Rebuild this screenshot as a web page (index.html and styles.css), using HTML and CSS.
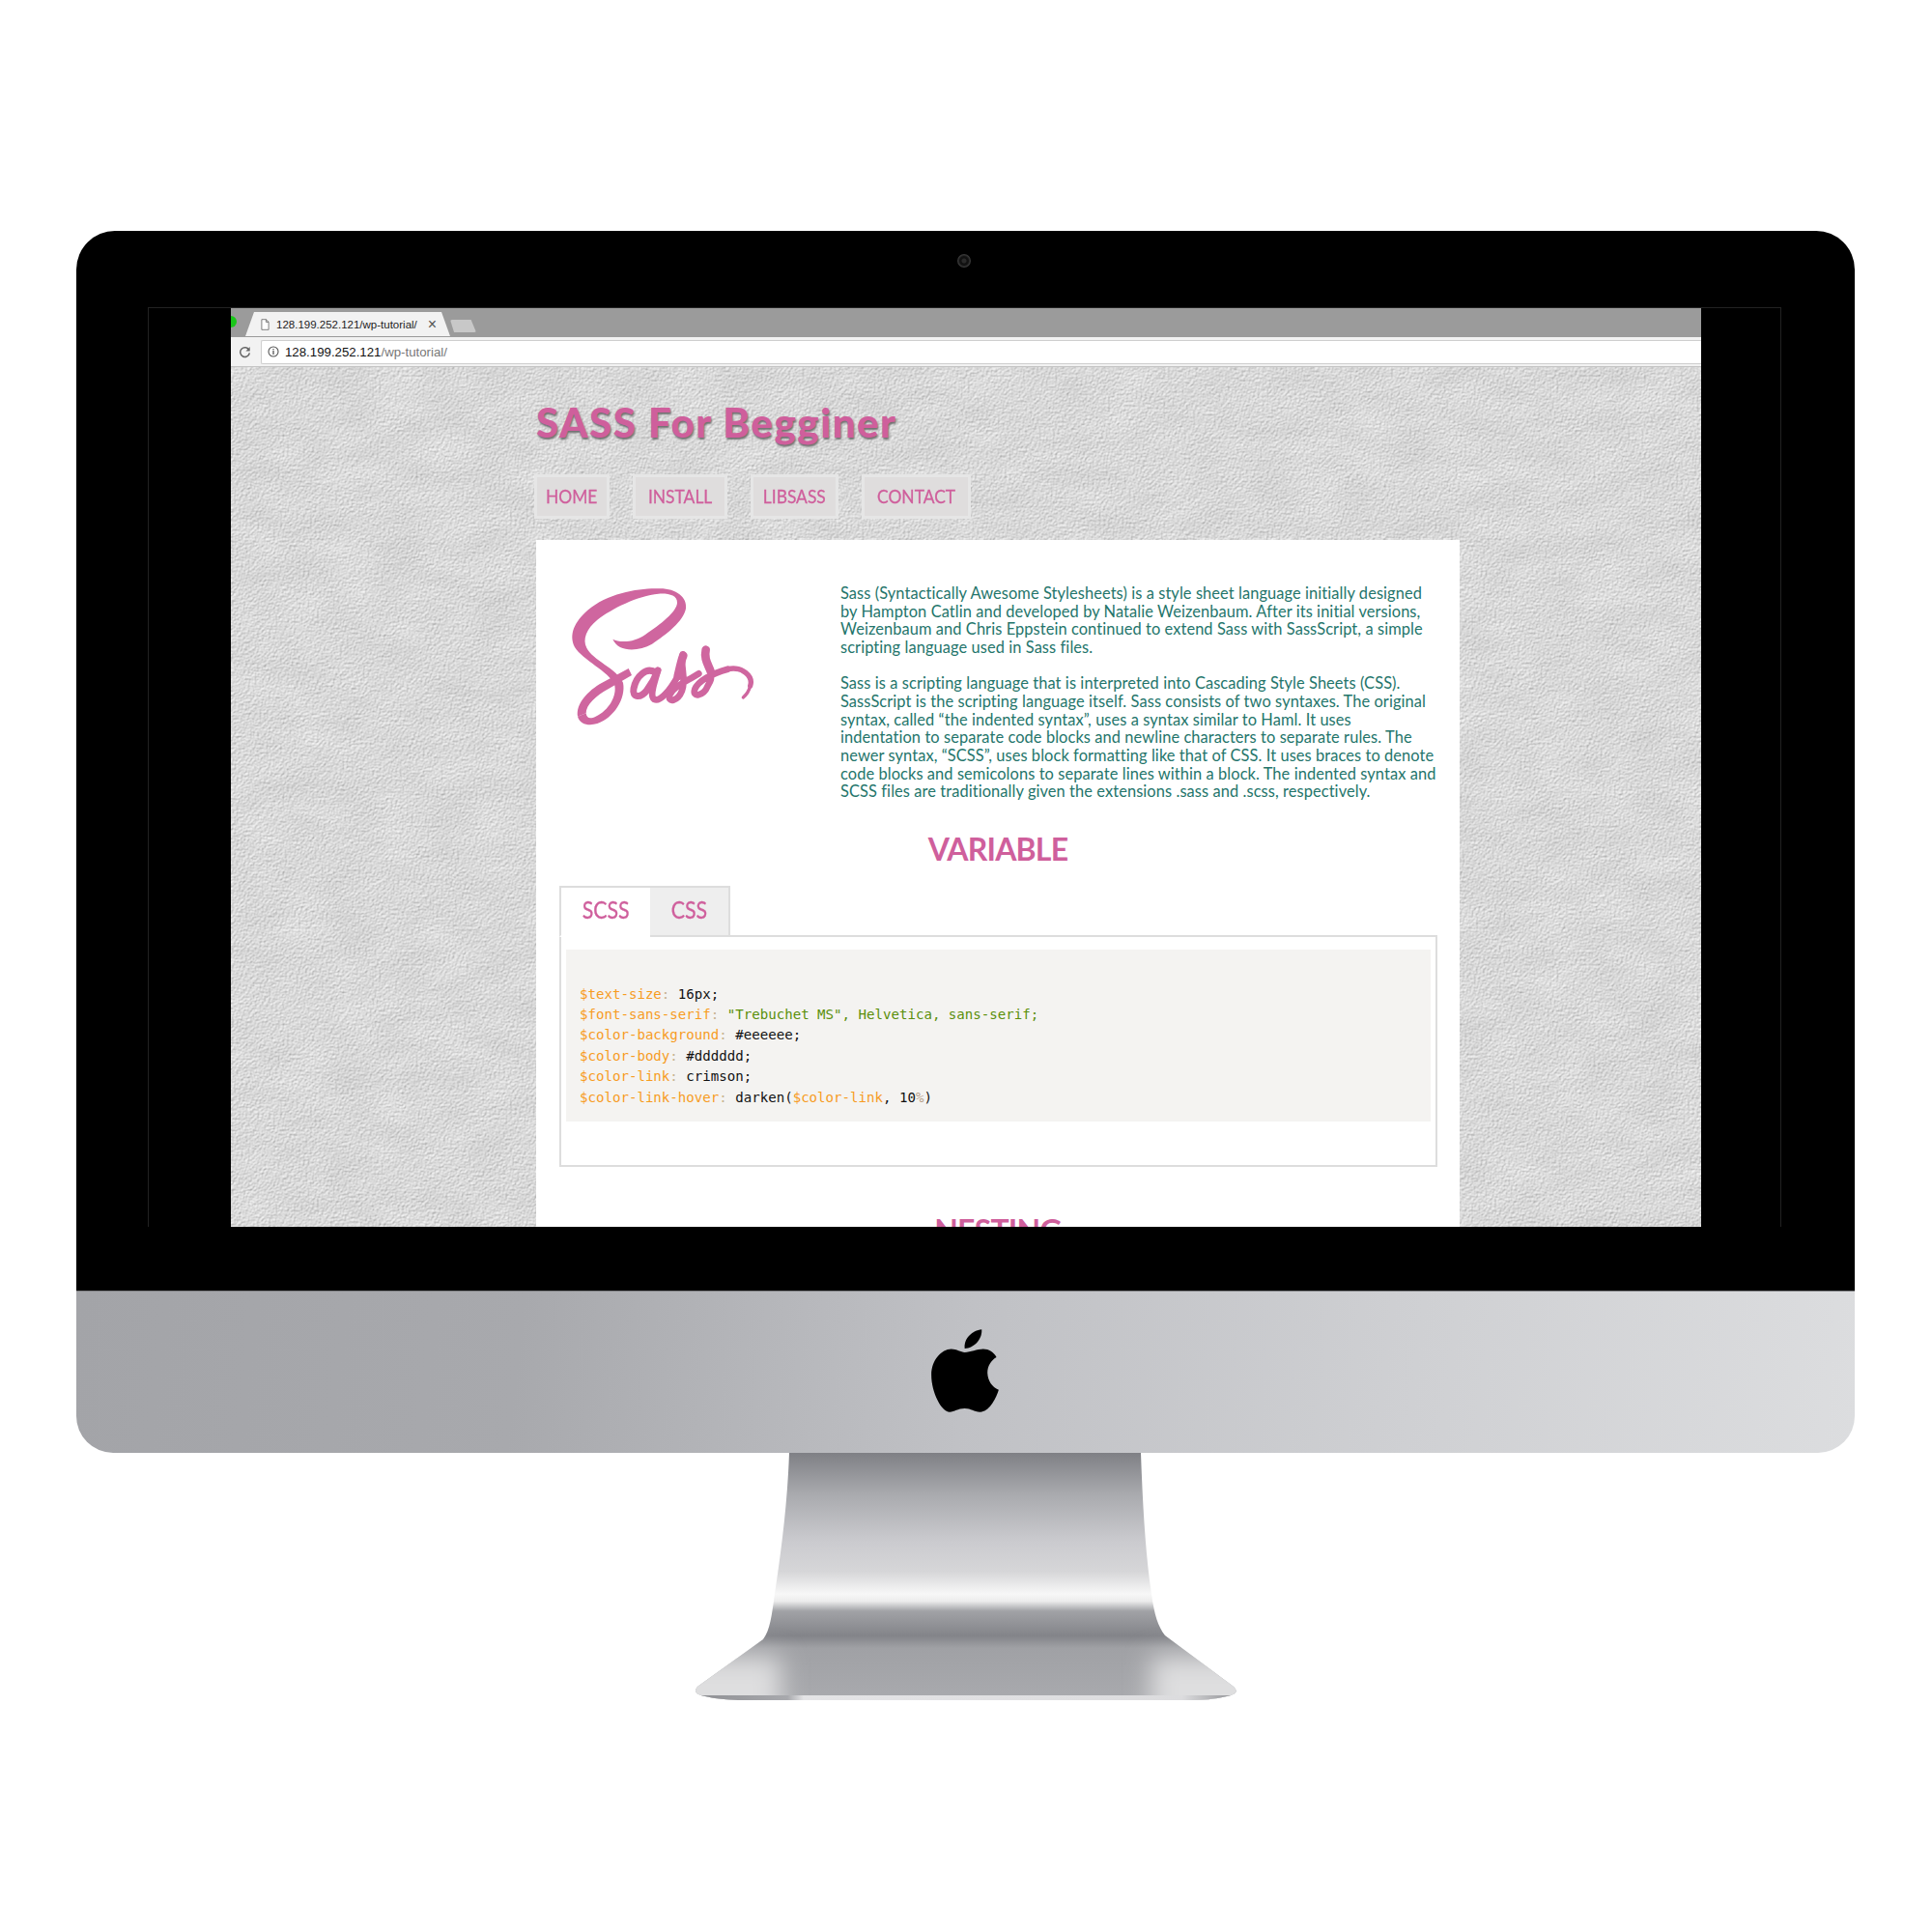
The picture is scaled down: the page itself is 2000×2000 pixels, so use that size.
FILE: index.html
```html
<!DOCTYPE html>
<html lang="en">
<head>
<meta charset="utf-8">
<title>SASS For Begginer</title>
<link rel="stylesheet" href="styles.css">
</head>
<body>
<div class="imac">
  <div class="bezel">
    <div class="camera"><span class="lens"></span></div>
    <div class="panel">
      <div class="browser">
        <div class="tabstrip">
          <span class="dot"></span>
          <div class="tab">
            <svg class="file-icon" viewBox="0 0 10 13"><path d="M1 .6h5l3 3v8.8H1z M6 .6v3h3" fill="#fff" stroke="#666" stroke-width=".9"/></svg>
            <span class="tab-title">128.199.252.121/wp-tutorial/</span>
            <span class="tab-close">×</span>
          </div>
          <div class="newtab"></div>
        </div>
        <div class="toolbar">
          <svg class="reload" viewBox="0 0 14 14"><path d="M11.6 4.6A5.2 5.2 0 1 0 12.2 8" fill="none" stroke="#666" stroke-width="1.6"/><path d="M12.6 1.2v4.6H8z" fill="#666"/></svg>
          <div class="address">
            <svg class="info" viewBox="0 0 12 12"><circle cx="6" cy="6" r="5" fill="none" stroke="#555" stroke-width="1.1"/><path d="M6 5v4M6 3v1.3" stroke="#555" stroke-width="1.3"/></svg>
            <span class="host">128.199.252.121</span><span class="path">/wp-tutorial/</span>
          </div>
        </div>
        <div class="page">
          <svg class="wall" width="1522" height="891">
            <filter id="stucco" x="0" y="0" width="100%" height="100%" color-interpolation-filters="sRGB">
              <feTurbulence type="fractalNoise" baseFrequency="0.42" numOctaves="4" seed="11"/>
              <feDiffuseLighting surfaceScale="0.6" lighting-color="#ffffff" diffuseConstant="1" result="grain">
                <feDistantLight azimuth="235" elevation="62"/>
              </feDiffuseLighting>
              <feGaussianBlur in="grain" stdDeviation="0.55" result="soft"/>
              <feTurbulence type="fractalNoise" baseFrequency="0.02 0.04" numOctaves="3" seed="4"/>
              <feColorMatrix values=".07 0 0 0 .93  .07 0 0 0 .93  .07 0 0 0 .93  0 0 0 0 1" result="mottle"/>
              <feBlend in="soft" in2="mottle" mode="multiply"/>
            </filter>
            <rect width="1522" height="891" filter="url(#stucco)"/>
          </svg>
          <div class="content">
            <h1 class="site-title">SASS For Begginer</h1>
            <nav class="nav">
              <a class="nav-item"><span class="squeeze">HOME</span></a>
              <a class="nav-item"><span class="squeeze">INSTALL</span></a>
              <a class="nav-item"><span class="squeeze">LIBSASS</span></a>
              <a class="nav-item"><span class="squeeze">CONTACT</span></a>
            </nav>
            <main class="card">
              <section class="intro">
                <svg class="logo" viewBox="0 0 630 480">
                  <g class="logo-fill">
                    <path d="M163 185C185 197 232 195 265 170C310 140 362 100 363 72C364 48 335 42 305 44C240 50 160 90 115 125C82 152 68 185 82 212C100 250 175 275 195 320C205 370 165 430 115 447C90 455 60 450 54 425L80 415C82 433 95 432 110 425C150 408 178 360 168 325C150 285 70 250 45 210C25 170 45 130 85 95C150 40 250 25 310 28C360 28 395 55 390 90C382 130 330 170 285 200C240 225 180 225 163 185Z"/>
                    <path d="M54 425C48 385 85 345 130 320L212 276L222 297L150 339C110 360 80 390 80 415Z"/>
                  </g>
                  <g class="logo-stroke">
                    <path stroke-width="21" d="M298 290C268 268 236 300 228 338C222 368 250 368 268 345C283 325 296 300 303 282"/>
                    <path stroke-width="20" d="M303 282C295 315 275 360 292 372C310 380 340 345 365 300"/>
                    <path stroke-width="26" d="M365 300C372 270 376 250 382 236"/>
                    <path stroke-width="20" d="M380 232C372 270 392 305 378 345C365 378 332 385 340 358C348 335 385 320 430 292"/>
                    <path stroke-width="26" d="M452 218C446 245 458 262 467 285"/>
                    <path stroke-width="20" d="M467 285C472 305 467 315 458 330C445 362 408 368 418 340C428 315 470 292 520 278"/>
                    <path stroke-width="16" d="M520 278C565 268 600 300 590 330"/>
                    <path stroke-width="10" d="M590 330C585 350 575 360 568 366"/>
                  </g>
                </svg>
                <div class="copy">
                  <p>Sass (Syntactically Awesome Stylesheets) is a style sheet language initially designed<br>by Hampton Catlin and developed by Natalie Weizenbaum. After its initial versions,<br>Weizenbaum and Chris Eppstein continued to extend Sass with SassScript, a simple<br>scripting language used in Sass files.</p>
                  <p>Sass is a scripting language that is interpreted into Cascading Style Sheets (CSS).<br>SassScript is the scripting language itself. Sass consists of two syntaxes. The original<br>syntax, called “the indented syntax”, uses a syntax similar to Haml. It uses<br>indentation to separate code blocks and newline characters to separate rules. The<br>newer syntax, “SCSS”, uses block formatting like that of CSS. It uses braces to denote<br>code blocks and semicolons to separate lines within a block. The indented syntax and<br>SCSS files are traditionally given the extensions .sass and .scss, respectively.</p>
                </div>
              </section>
              <h2 class="heading">VARIABLE</h2>
              <div class="tabs">
                <div class="tabs-head">
                  <span class="code-tab active"><span class="squeeze">SCSS</span></span>
                  <span class="code-tab"><span class="squeeze">CSS</span></span>
                </div>
                <div class="tabs-body">
<pre class="code"><span class="v">$text-size<i>:</i></span> 16px;
<span class="v">$font-sans-serif<i>:</i></span> <span class="s">"Trebuchet MS", Helvetica, sans-serif;</span>
<span class="v">$color-background<i>:</i></span> #eeeeee;
<span class="v">$color-body<i>:</i></span> #dddddd;
<span class="v">$color-link<i>:</i></span> crimson;
<span class="v">$color-link-hover<i>:</i></span> darken(<span class="v">$color-link</span>, 10<span class="pct">%</span>)</pre>
                </div>
              </div>
              <h2 class="heading next">NESTING</h2>
            </main>
          </div>
        </div>
      </div>
    </div>
  </div>
  <div class="chin">
    <svg class="apple" viewBox="193 108 210 259"><path d="M350 109C352 140 325 168 297 168C293 138 320 112 350 109Z"/><path d="M297 180C315 180 335 170 355 170C372 170 388 180 396 195C378 205 367 225 368 245C369 268 382 288 403 297C395 322 375 365 345 366C325 366 318 355 297 355C275 355 265 366 250 366C225 366 193 305 193 250C193 205 225 170 255 170C272 170 285 180 297 180Z"/></svg>
  </div>
  <svg class="stand" viewBox="720 1504 560 256">
    <defs>
      <linearGradient id="metal" x1="0" y1="0" x2="0" y2="1">
        <stop offset="0" stop-color="#7f8085"/>
        <stop offset=".167" stop-color="#a9aaae"/>
        <stop offset=".36" stop-color="#cbcbcf"/>
        <stop offset=".48" stop-color="#d6d6d8"/>
        <stop offset=".57" stop-color="#f7f7f7"/>
        <stop offset=".60" stop-color="#ececec"/>
        <stop offset=".64" stop-color="#a1a2a6"/>
        <stop offset=".74" stop-color="#838489"/>
        <stop offset=".79" stop-color="#a0a1a5"/>
        <stop offset="1" stop-color="#a9aaae"/>
      </linearGradient>
      <linearGradient id="rim" x1="0" x2="1" y1="0" y2="0">
        <stop offset="0" stop-color="#8e8f93"/>
        <stop offset=".17" stop-color="#a8a9ad"/>
        <stop offset=".2" stop-color="#e4e4e6"/>
        <stop offset=".9" stop-color="#dcdcde"/>
        <stop offset="1" stop-color="#8e8f93"/>
      </linearGradient>
      <clipPath id="standclip"><path d="M817 1504L1181 1504C1183 1560 1186 1610 1192 1650C1195 1672 1199 1684 1206 1693L1277 1746C1282 1751 1280 1754 1270 1756C1258 1759 1245 1760 1230 1760L770 1760C755 1760 742 1759 730 1756C720 1754 718 1751 722 1746L790 1697C797 1688 799 1672 802 1650C808 1610 815 1560 817 1504Z"/></clipPath>
      <filter id="soft" x="-60%" y="-60%" width="220%" height="220%"><feGaussianBlur stdDeviation="13"/></filter>
    </defs>
    <g clip-path="url(#standclip)">
      <rect x="720" y="1504" width="560" height="256" fill="url(#metal)"/>
      <path class="glow" d="M690 1715L808 1715L808 1790L690 1790Z" filter="url(#soft)"/>
      <path class="glow" d="M1192 1715L1310 1715L1310 1790L1192 1790Z" filter="url(#soft)"/>
      <rect x="720" y="1755" width="560" height="5" fill="url(#rim)"/>
    </g>
  </svg>
</div>
</body>
</html>
```
FILE: styles.css
```css
* { box-sizing: border-box; }
html, body { margin: 0; padding: 0; background: #fff; }
body { height: 2000px; overflow: hidden; font-family: "Lato", "Liberation Sans", sans-serif; }

.imac { width: 1841px; margin: 239px 0 0 79px; }
.bezel { height: 1097px; background: #000; border-radius: 40px 40px 0 0; display: flex; flex-direction: column; }
.camera { height: 62px; padding-top: 24px; display: flex; justify-content: center; }
.lens { width: 14px; height: 14px; border-radius: 50%; background: radial-gradient(circle, #2a2a2a 0 20%, #111 30% 45%, #3a3a3a 65%, #1a1a1a 100%); margin-right: 4px; }
.panel { margin: 17px 0 0 74px; width: 1691px; height: 952px; border: 1px solid #222; border-bottom: 0; padding-left: 85px; }
.browser { width: 1522px; height: 951px; display: flex; flex-direction: column; overflow: hidden; background: #fff; }

.tabstrip { height: 30px; flex: none; background: #9b9b9b; display: flex; align-items: flex-end; padding: 0 0 1px 15px; position: relative; }
.dot { position: absolute; left: -6px; top: 8px; width: 12px; height: 12px; border-radius: 50%; background: #19c619; }
.tab { width: 212px; height: 25px; background: #f2f2f2; clip-path: polygon(0 100%, 9px 0, 203px 0, 100% 100%); display: flex; align-items: center; padding-left: 16px; font-family: "Liberation Sans", sans-serif; }
.file-icon { width: 9px; height: 12px; flex: none; }
.tab-title { font-size: 11.5px; color: #222; margin-left: 7px; white-space: nowrap; }
.tab-close { font-size: 16px; color: #555; margin-left: 11px; line-height: 1; }
.newtab { width: 27px; height: 13px; margin: 0 0 4px 0; background: #c8c8c8; border-radius: 2px; clip-path: polygon(0 0, 80% 0, 100% 100%, 15% 100%); }

.toolbar { height: 31px; flex: none; background: #f2f2f2; display: flex; align-items: center; padding-left: 8px; border-bottom: 1px solid #c4c4c4; font-family: "Liberation Sans", sans-serif; }
.reload { width: 13px; height: 13px; flex: none; }
.address { flex: 1; height: 25px; margin-left: 10px; background: #fff; border: 1px solid #cfcfcf; border-right: 0; border-radius: 2px 0 0 2px; display: flex; align-items: center; padding-left: 6px; font-size: 13.25px; white-space: nowrap; }
.info { width: 12px; height: 12px; margin-right: 6px; flex: none; }
.host { color: #111; }
.path { color: #777; }

.page { flex: 1; position: relative; overflow: hidden; background: #d8d8d8; }
.wall { position: absolute; left: 0; top: 0; display: block; }
.content { position: relative; padding-left: 316px; width: 1273px; }

.site-title { margin: 0; padding-top: 31px; height: 111px; font-size: 42px; line-height: 52px; font-weight: 900; color: #cf5f9c; letter-spacing: 1.55px; text-shadow: 1px 2px 2px #6f6f6f; white-space: nowrap; }
.nav { display: grid; grid-template-columns: 78px 98px 91px 113px; column-gap: 24px; margin-left: -2px; height: 68px; }
.nav-item { height: 46px; padding-bottom: 2px; background: #dfdddd; border: 3px solid #e6e6e6; display: flex; align-items: center; justify-content: center; font-size: 20px; color: #cf5f9c; white-space: nowrap; }
.squeeze { display: inline-block; transform: scaleX(0.87); -webkit-text-stroke: 0.3px currentColor; }

.card { width: 956px; height: 712px; background: #fff; padding-top: 41px; overflow: hidden; }
.intro { display: flex; padding-left: 25px; }
.logo { width: 210px; height: 160px; flex: none; margin-right: 80px; display: block; }
.logo-fill path { fill: #cf669f; }
.logo-stroke path { fill: none; stroke: #cf669f; stroke-linecap: round; stroke-linejoin: round; }
.copy { margin-top: 5px; font-size: 16.4px; line-height: 18.65px; color: #24756b; white-space: nowrap; letter-spacing: 0.09px; }
.copy p { margin: 0 0 18.65px; }

.heading { margin: 11px 0 0; font-size: 32px; line-height: 40px; font-weight: 700; text-align: center; color: #cf5f9c; letter-spacing: -0.8px; }
.heading.next { margin-top: 46px; }
.tabs { margin: 18px 0 0 24px; width: 909px; }
.tabs-head { display: flex; height: 51px; position: relative; }
.code-tab { display: flex; align-items: center; justify-content: center; width: 83px; height: 53px; padding-bottom: 3px; background: #eee; border: 2px solid #ddd; border-left: 0; font-size: 24.5px; color: #cf5f9c; }
.code-tab.active { width: 94px; background: #fff; border-left: 2px solid #ddd; border-bottom-color: #fff; border-right: 0; position: relative; z-index: 1; }
.tabs-body { height: 240px; border: 2px solid #ddd; padding: 13px 5px 0; }
.code { margin: 0; height: 178px; background: #f4f3f1; padding: 36px 14px 0; font-family: "DejaVu Sans Mono", "Liberation Mono", monospace; font-size: 14.1px; line-height: 21.4px; color: #111; }
.v { color: #f79c1f; }
.v i { font-style: normal; color: #c9b394; }
.s { color: #5a8f0a; }
.pct { color: #b8a28c; }

.chin { height: 168px; border-top: 1px solid #7f8083; background: linear-gradient(97deg, #a3a4a8 0%, #a8a9ad 25%, #c0c1c5 50%, #cfd0d3 75%, #dcdddf 100%); border-radius: 0 0 38px 38px; display: flex; justify-content: center; padding-top: 39px; }
.apple { width: 70px; height: 86px; display: block; margin-right: 1px; }
.apple path { fill: #000; }
.stand { display: block; width: 560px; height: 256px; margin-left: 641px; }
.glow { fill: #dededf; }
```
